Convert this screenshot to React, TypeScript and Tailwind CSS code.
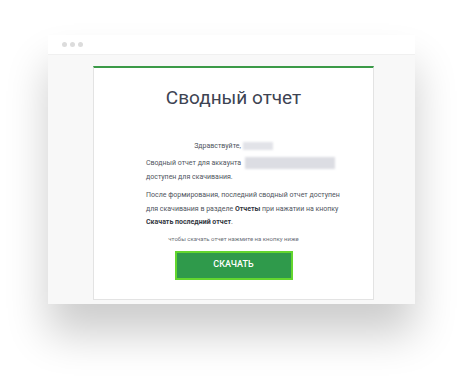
export default function App() {
  return (
    <div className="w-[474px] h-[387px] bg-white pt-[35px] pl-[48px] font-['Roboto',sans-serif]">
      <div className="w-[367px] h-[269px] flex flex-col shadow-[0_30px_40px_rgba(0,0,0,0.2)]">
        <div className="h-[20px] shrink-0 bg-white flex items-center gap-[3px] pl-[14px] border-b border-[#f0f0f0]">
          <span className="w-[5px] h-[5px] rounded-full bg-[#dcdcdc]" />
          <span className="w-[5px] h-[5px] rounded-full bg-[#dcdcdc]" />
          <span className="w-[5px] h-[5px] rounded-full bg-[#dcdcdc]" />
        </div>
        <div className="flex-1 min-h-0 bg-[#f8f8f8] pl-[45px] pr-[41px] pt-[11px] pb-[4px] flex">
          <div className="flex-1 bg-white border-t-2 border-t-[#3b9a48] border-x border-b border-[#e3e3e3] flex flex-col">
            <h1 className="text-center text-[19px] leading-[26px] text-[#3d4352] mt-[17px]">Сводный отчет</h1>
            <div className="text-[7px] leading-[14px] text-[#4f5560] mt-[28px] whitespace-nowrap">
              <div className="flex justify-center items-center gap-[2px]">
                <span>Здравствуйте,</span>
                <span className="w-[30px] h-[8px] bg-[#e2e3e8] blur-[1px]" />
              </div>
              <div className="ml-[52px] mt-[3px]">
                <div className="flex items-center">
                  <span>Сводный отчет для аккаунта</span>
                  <span className="ml-[4px] w-[90px] h-[12px] bg-[#dcdde3] blur-[1px]" />
                </div>
                <div>доступен для скачивания.</div>
                <p className="mt-[5px] leading-[13.5px]">
                  После формирования, последний сводный отчет доступен
                  <br />
                  для скачивания в разделе <b className="text-[#333842]">Отчеты</b> при нажатии на кнопку
                  <br />
                  <b className="text-[#333842]">Скачать последний отчет</b>.
                </p>
              </div>
            </div>
            <div className="text-center text-[6px] leading-[10px] text-[#6b6f78] mt-[4px]">
              чтобы скачать отчет нажмите на кнопку ниже
            </div>
            <div className="flex justify-center mt-[7px]">
              <button className="w-[118px] h-[29px] bg-[#2f9a4b] border-2 border-[#63d62e] text-white text-[9px] font-medium">
                СКАЧАТЬ
              </button>
            </div>
          </div>
        </div>
      </div>
    </div>
  )
}
